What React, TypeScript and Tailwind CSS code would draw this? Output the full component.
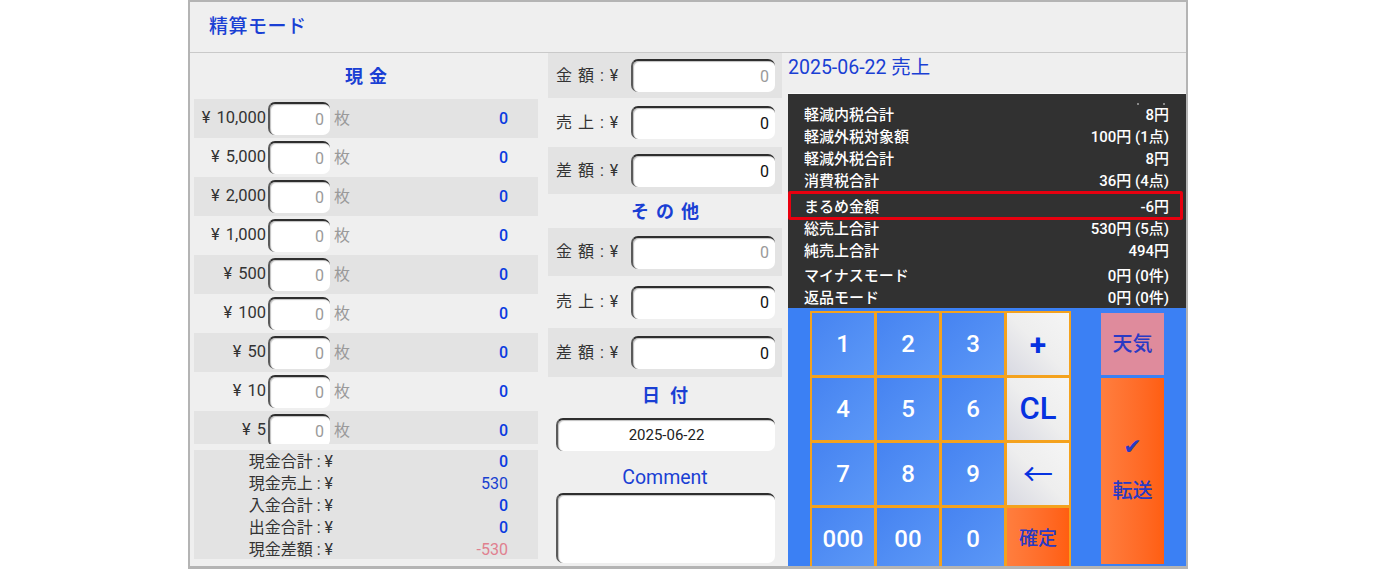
import React from "react";

const cn = (...c: (string | false | undefined)[]) => c.filter(Boolean).join(" ");

// inset-looking input box used all over the form
const Field = ({ value = "0", muted = false, className = "", center = false }: { value?: string; muted?: boolean; className?: string; center?: boolean }) => (
  <div
    className={cn(
      "h-[33px] bg-white rounded-[7px] border-t-2 border-l-2 border-t-[#2e2e2e] border-l-[#5a5a5a] shadow-[inset_1px_1px_1px_rgba(0,0,0,0.25)] flex items-center",
      center ? "justify-center text-[#222]" : "justify-end pr-[6px] text-[16px]",
      muted ? "text-[#9a9a9a]" : "text-[#111]",
      className
    )}
  >
    {value}
  </div>
);

const denominations = ["10,000", "5,000", "2,000", "1,000", "500", "100", "50", "10", "5"];

const totals = [
  { label: "現金合計", value: "0", color: "text-[#0b3be0] font-medium" },
  { label: "現金売上", value: "530", color: "text-[#1840d0]" },
  { label: "入金合計", value: "0", color: "text-[#0b3be0] font-medium" },
  { label: "出金合計", value: "0", color: "text-[#0b3be0] font-medium" },
  { label: "現金差額", value: "-530", color: "text-[#e0808f]" },
];

const summary = [
  { label: "軽減内税合計", value: "8円", mt: "" },
  { label: "軽減外税対象額", value: "100円 (1点)", mt: "" },
  { label: "軽減外税合計", value: "8円", mt: "" },
  { label: "消費税合計", value: "36円 (4点)", mt: "" },
  { label: "まるめ金額", value: "-6円", mt: "mt-[4px]" },
  { label: "総売上合計", value: "530円 (5点)", mt: "" },
  { label: "純売上合計", value: "494円", mt: "" },
  { label: "マイナスモード", value: "0円 (0件)", mt: "mt-[3px]" },
  { label: "返品モード", value: "0円 (0件)", mt: "" },
];

const MidRow = ({ label, muted, dark, h }: { label: string; muted?: boolean; dark?: boolean; h: string }) => (
  <div className={cn("flex items-center pl-[8px] pr-[7px]", h, dark && "bg-[#e3e3e3]")}>
    <span className="w-[75px] shrink-0 text-[16px] text-[#333] tracking-[1px]">{label}</span>
    <Field muted={muted} className="flex-1" />
  </div>
);

const numKey = "bg-linear-to-br from-[#4683f1] to-[#5d99f7] text-white text-[24px] font-medium flex items-center justify-center";
const grayKey = "bg-linear-to-bl from-[#f5f5f5] via-[#eeeeee] to-[#d8d9e2] text-[#0632e0] flex items-center justify-center";

export default function App() {
  return (
    <div className="w-[1376px] h-[569px] bg-white font-[Roboto,'Noto_Sans_CJK_JP',sans-serif] overflow-hidden">
      <div className="mx-auto w-[1000px] h-[569px] border-x-2 border-t-2 border-b-[3px] border-[#b4b4b4] bg-[#efefef] flex flex-col overflow-hidden">
        {/* header */}
        <div className="h-[51px] shrink-0 border-b border-[#c9c9c9] flex items-center pl-[19px]">
          <span className="text-[19px] font-medium text-[#1a3fd4] tracking-[0.5px]">精算モード</span>
        </div>

        <div className="flex flex-1 min-h-0">
          {/* cash column */}
          <div className="w-[344px] ml-[4px] flex flex-col">
            <div className="h-[46px] flex items-center justify-center">
              <span className="text-[18px] font-bold text-[#1a3fd4] tracking-[6px] pl-[6px]">現金</span>
            </div>
            {denominations.map((d, i) => (
              <div
                key={d}
                className={cn(
                  "flex items-start pt-[3px] overflow-hidden",
                  i === denominations.length - 1 ? "h-[33px]" : "h-[39px]",
                  i % 2 === 0 && "bg-[#e3e3e3]"
                )}
              >
                <span className="w-[72px] h-[31px] pt-[2px] flex items-center justify-end text-[16.5px] text-[#333] shrink-0">
                  <span className="mr-[6px]">¥</span>
                  {d}
                </span>
                <Field muted className="w-[62px] h-[31px] ml-[2px] shrink-0" />
                <span className="h-[31px] pt-[2px] flex items-center ml-[4px] text-[16px] text-[#9a9a9a]">枚</span>
                <span className="h-[31px] pt-[2px] flex items-center ml-auto mr-[30px] text-[16px] font-medium text-[#0b3be0]">0</span>
              </div>
            ))}
            <div className="mt-[6px] h-[109px] bg-[#e3e3e3] pt-[1px]">
              {totals.map((t) => (
                <div key={t.label} className="flex h-[22px] items-center text-[16px]">
                  <span className="w-[139px] text-right text-[#333] whitespace-pre">{t.label + " : ¥"}</span>
                  <span className={cn("ml-auto mr-[30px]", t.color)}>{t.value}</span>
                </div>
              ))}
            </div>
          </div>

          {/* other column */}
          <div className="w-[234px] ml-[10px] flex flex-col">
            <MidRow label="金 額 : ¥" muted dark h="h-[45px]" />
            <MidRow label="売 上 : ¥" h="h-[49px]" />
            <MidRow label="差 額 : ¥" dark h="h-[47px]" />
            <div className="h-[34px] flex items-center justify-center">
              <span className="text-[18px] font-bold text-[#1a3fd4] tracking-[7px] pl-[7px]">その他</span>
            </div>
            <MidRow label="金 額 : ¥" muted dark h="h-[48px]" />
            <MidRow label="売 上 : ¥" h="h-[52px]" />
            <MidRow label="差 額 : ¥" dark h="h-[49px]" />
            <div className="h-[36px] flex items-center justify-center">
              <span className="text-[18px] font-bold text-[#1a3fd4] tracking-[10px] pl-[10px]">日付</span>
            </div>
            <div className="pl-[8px] pr-[7px] mt-[5px]">
              <Field value="2025-06-22" center className="text-[15px]" />
            </div>
            <div className="h-[42px] pt-[12px] flex items-center justify-center">
              <span className="text-[19.5px] text-[#1a3fd4]">Comment</span>
            </div>
            <div className="pl-[8px] pr-[7px]">
              <div className="h-[70px] bg-white rounded-[7px] border-t-2 border-l-2 border-t-[#2e2e2e] border-l-[#5a5a5a] shadow-[inset_1px_1px_1px_rgba(0,0,0,0.25)]" />
            </div>
          </div>

          {/* sales summary + keypad */}
          <div className="w-[398px] ml-[6px] flex flex-col">
            <div className="h-[40px] pt-[3px]">
              <span className="text-[19.5px] leading-[24px] text-[#1a3fd4]">2025-06-22 売上</span>
            </div>
            <div className="relative h-[215px] shrink-0 bg-[#313131] border-t border-[#f8f8f8] overflow-hidden pt-[10px] pl-[16px] pr-[17px] text-white text-[15px] font-medium">
              <span className="absolute top-[9px] left-[349px] w-[2px] h-[2px] bg-[#888]" />
              <span className="absolute top-[9px] left-[375px] w-[2px] h-[2px] bg-[#888]" />
              {summary.map((s) => (
                <div key={s.label} className={cn("flex justify-between h-[22px] items-center", s.mt)}>
                  <span>{s.label}</span>
                  <span>{s.value}</span>
                </div>
              ))}
              <div className="absolute top-[97px] left-0 w-[395px] h-[29px] border-[3px] border-[#e8000f] rounded-[2px]" />
            </div>
            <div className="flex-1 min-h-0 bg-[#3b80f4] overflow-hidden flex items-start pt-[3px] pl-[22px]">
              <div className="grid grid-cols-[repeat(4,62px)] grid-rows-[repeat(4,62px)] gap-[3px] p-[2px] bg-[#f4a21e] shrink-0">
                <div className={numKey}>1</div>
                <div className={numKey}>2</div>
                <div className={numKey}>3</div>
                <div className={cn(grayKey, "text-[30px] font-bold")}>+</div>
                <div className={numKey}>4</div>
                <div className={numKey}>5</div>
                <div className={numKey}>6</div>
                <div className={cn(grayKey, "text-[31px] font-medium")}>CL</div>
                <div className={numKey}>7</div>
                <div className={numKey}>8</div>
                <div className={numKey}>9</div>
                <div className={cn(grayKey, "text-[30px]")}>←</div>
                <div className={numKey}>000</div>
                <div className={numKey}>00</div>
                <div className={numKey}>0</div>
                <div className="bg-linear-to-r from-[#ff7e3e] to-[#ff5e10] text-[#2a3ac4] text-[19px] font-medium flex items-center justify-center">確定</div>
              </div>
              <div className="ml-[30px] pt-[2px] flex flex-col gap-[3px]">
                <div className="w-[63px] h-[62px] bg-[#df8b9c] text-[#2a3ac4] text-[20px] font-medium flex items-center justify-center">天気</div>
                <div className="w-[63px] h-[186px] bg-linear-to-r from-[#ff7e3e] to-[#ff5e10] text-[#2a3ac4] flex flex-col items-center pt-[56px]">
                  <span className="text-[22px] leading-[26px] font-['DejaVu_Sans']">✔</span>
                  <span className="text-[20px] font-medium mt-[16px]">転送</span>
                </div>
              </div>
            </div>
          </div>
        </div>
      </div>
    </div>
  );
}
